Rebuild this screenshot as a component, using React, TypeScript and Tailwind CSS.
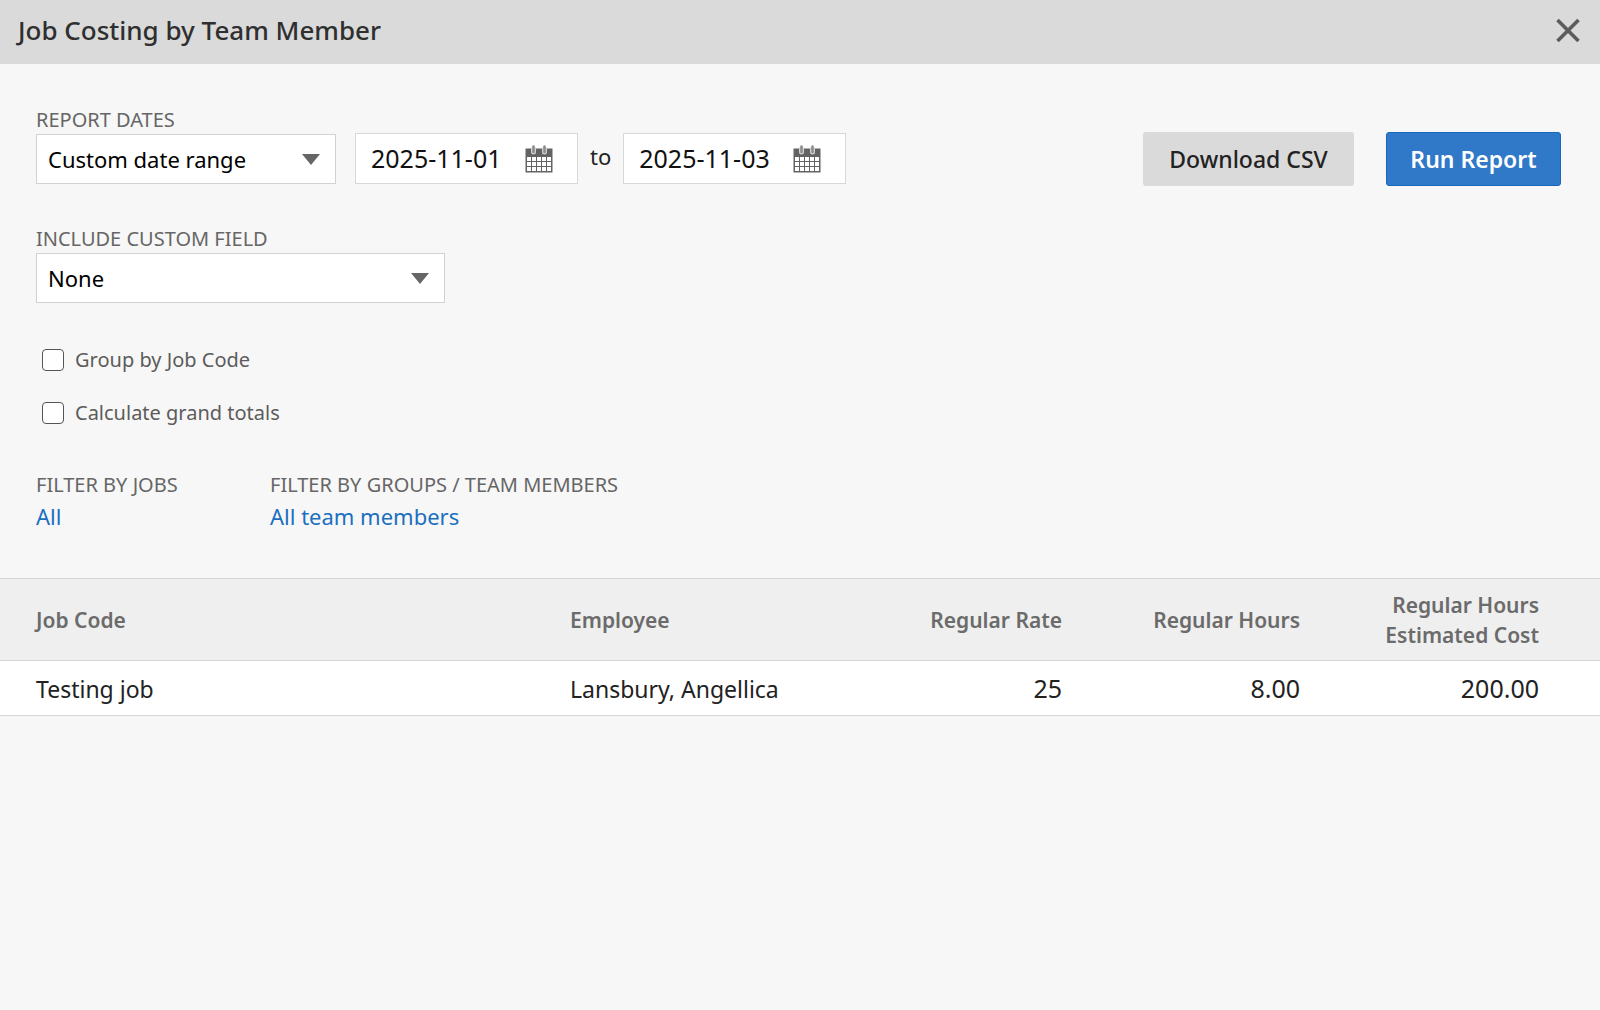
import { useState } from 'react';
import type { ReactNode } from 'react';

interface CostRow {
  jobCode: string;
  employee: string;
  rate: string;
  hours: string;
  cost: string;
}

const ROWS: CostRow[] = [
  { jobCode: 'Testing job', employee: 'Lansbury, Angellica', rate: '25', hours: '8.00', cost: '200.00' },
];

const DATE_RANGES = ['Custom date range', 'This week', 'Last week', 'This month', 'Last month'];
const CUSTOM_FIELDS = ['None', 'Class', 'Service item'];

function CalendarIcon() {
  return (
    <svg width="28" height="28" viewBox="0 0 28 28" aria-hidden="true">
      <path d="M0.5 3.5h27v24h-27z" fill="#636363" />
      <g fill="#ffffff">
        {[12, 17, 22].map((y) =>
          [2, 7, 12, 17, 22].map((x) => <rect key={`${x}-${y}`} x={x} y={y} width="4" height="4" />),
        )}
      </g>
      <g strokeLinecap="round">
        <path d="M8.5 4v3M19.5 4v3" stroke="#d4d4d4" strokeWidth="5" />
        <path d="M8.5 1.5v5.5M19.5 1.5v5.5" stroke="#8c8c8c" strokeWidth="2.5" />
      </g>
    </svg>
  );
}

interface SelectProps {
  id: string;
  label: string;
  options: string[];
  widthClass: string;
}

function SelectField({ id, label, options, widthClass }: SelectProps) {
  const [value, setValue] = useState(options[0]);

  return (
    <div>
      <label htmlFor={id} className="block text-[20px] leading-7 text-[#666666]">
        {label}
      </label>
      <div className={`relative ${widthClass}`}>
        <select
          id={id}
          value={value}
          onChange={(e) => setValue(e.target.value)}
          className="h-[50px] w-full appearance-none border border-[#d2d2d2] bg-white pl-[11px] pr-12 text-[22px] text-black outline-none"
        >
          {options.map((option) => (
            <option key={option}>{option}</option>
          ))}
        </select>
        <svg
          className="pointer-events-none absolute right-4 top-5"
          width="18"
          height="11"
          viewBox="0 0 18 11"
          aria-hidden="true"
        >
          <path d="M0 0h18L9 11z" fill="#666666" />
        </svg>
      </div>
    </div>
  );
}

function DateField({ label, initial }: { label: string; initial: string }) {
  const [value, setValue] = useState(initial);

  return (
    <div className="flex h-[51px] w-[223px] items-center border border-[#d8d8d8] bg-white pl-[15px]">
      <input
        type="text"
        aria-label={label}
        value={value}
        onChange={(e) => setValue(e.target.value)}
        className="w-[154px] bg-transparent text-[25px] text-[#111111] outline-none"
      />
      <button type="button" aria-label={`Pick ${label.toLowerCase()}`}>
        <CalendarIcon />
      </button>
    </div>
  );
}

function CheckField({ children }: { children: ReactNode }) {
  return (
    <label className="flex items-center gap-[11px] text-[20px] leading-[30px] text-[#5c5c5c]">
      <input
        type="checkbox"
        className="size-[22px] appearance-none rounded border border-[#555555] bg-white checked:bg-[#2f78c8]"
      />
      {children}
    </label>
  );
}

function FilterLink({ label, value }: { label: string; value: string }) {
  return (
    <div>
      <p className="text-[20px] leading-[30px] text-[#666666]">{label}</p>
      <a href="#" className="block text-[22px] leading-8 text-[#1b6fbf]">
        {value}
      </a>
    </div>
  );
}

export default function App() {
  return (
    <div className="min-h-screen bg-[#f7f7f7] font-['Noto_Sans',sans-serif]">
      <header className="flex h-16 items-center justify-between bg-[#dadada] pl-[18px] pr-5 pb-1">
        <h1 className="text-[26px] font-medium text-[#2f2f2f]">Job Costing by Team Member</h1>
        <button type="button" aria-label="Close">
          <svg width="24" height="24" viewBox="0 0 24 24" aria-hidden="true">
            <path d="M1.5 2l21 21M22.5 2l-21 21" stroke="#5c5c5c" strokeWidth="3.6" />
          </svg>
        </button>
      </header>

      <main>
        <form className="pl-9 pr-[39px] pt-[42px]" onSubmit={(e) => e.preventDefault()}>
          <div className="flex items-start justify-between">
            <div className="flex items-end">
              <SelectField id="report-dates" label="REPORT DATES" options={DATE_RANGES} widthClass="w-[300px]" />
              <div className="ml-[19px] flex items-center gap-3">
                <DateField label="Start date" initial="2025-11-01" />
                <span className="pb-1 text-[22px] text-[#222222]">to</span>
                <DateField label="End date" initial="2025-11-03" />
              </div>
            </div>
            <div className="flex gap-8 pt-[26px]">
              <button type="button" className="h-[54px] w-[211px] rounded-[3px] bg-[#dadada] text-[23px] font-medium text-[#222222]">
                Download CSV
              </button>
              <button
                type="submit"
                className="h-[54px] w-[175px] rounded-[3px] border border-[#1767bd] bg-[#3078c8] text-[23px] font-semibold text-white"
              >
                Run Report
              </button>
            </div>
          </div>

          <div className="mt-[39px]">
            <SelectField id="custom-field" label="INCLUDE CUSTOM FIELD" options={CUSTOM_FIELDS} widthClass="w-[409px]" />
          </div>

          <div className="mt-[42px] flex flex-col gap-[23px] pl-[6px]">
            <CheckField>Group by Job Code</CheckField>
            <CheckField>Calculate grand totals</CheckField>
          </div>

          <div className="mt-[42px] flex">
            <div className="w-[234px]">
              <FilterLink label="FILTER BY JOBS" value="All" />
            </div>
            <FilterLink label="FILTER BY GROUPS / TEAM MEMBERS" value="All team members" />
          </div>
        </form>

        <table className="mt-[46px] w-full table-fixed border-collapse">
          <thead>
            <tr className="h-[82px] border-y border-[#d6d6d6] bg-[#efefef] text-[21px] leading-[30px] text-[#6b6b6b]">
              <th className="pl-9 text-left font-semibold">Job Code</th>
              <th className="w-[252px] text-left font-semibold">Employee</th>
              <th className="w-[240px] text-right font-semibold">Regular Rate</th>
              <th className="w-[238px] text-right font-semibold">Regular Hours</th>
              <th className="w-[300px] pr-[61px] text-right font-semibold">
                Regular Hours
                <br />
                Estimated Cost
              </th>
            </tr>
          </thead>
          <tbody>
            {ROWS.map((row) => (
              <tr key={row.jobCode} className="h-[55px] border-b border-[#d6d6d6] bg-white text-[23px] text-[#222222]">
                <td className="pl-9 pt-[2px]">{row.jobCode}</td>
                <td className="whitespace-nowrap pt-[2px]">{row.employee}</td>
                <td className="pt-[2px] text-right text-[25px]">{row.rate}</td>
                <td className="pt-[2px] text-right text-[25px]">{row.hours}</td>
                <td className="pr-[61px] pt-[2px] text-right text-[25px]">{row.cost}</td>
              </tr>
            ))}
          </tbody>
        </table>
      </main>
    </div>
  );
}
